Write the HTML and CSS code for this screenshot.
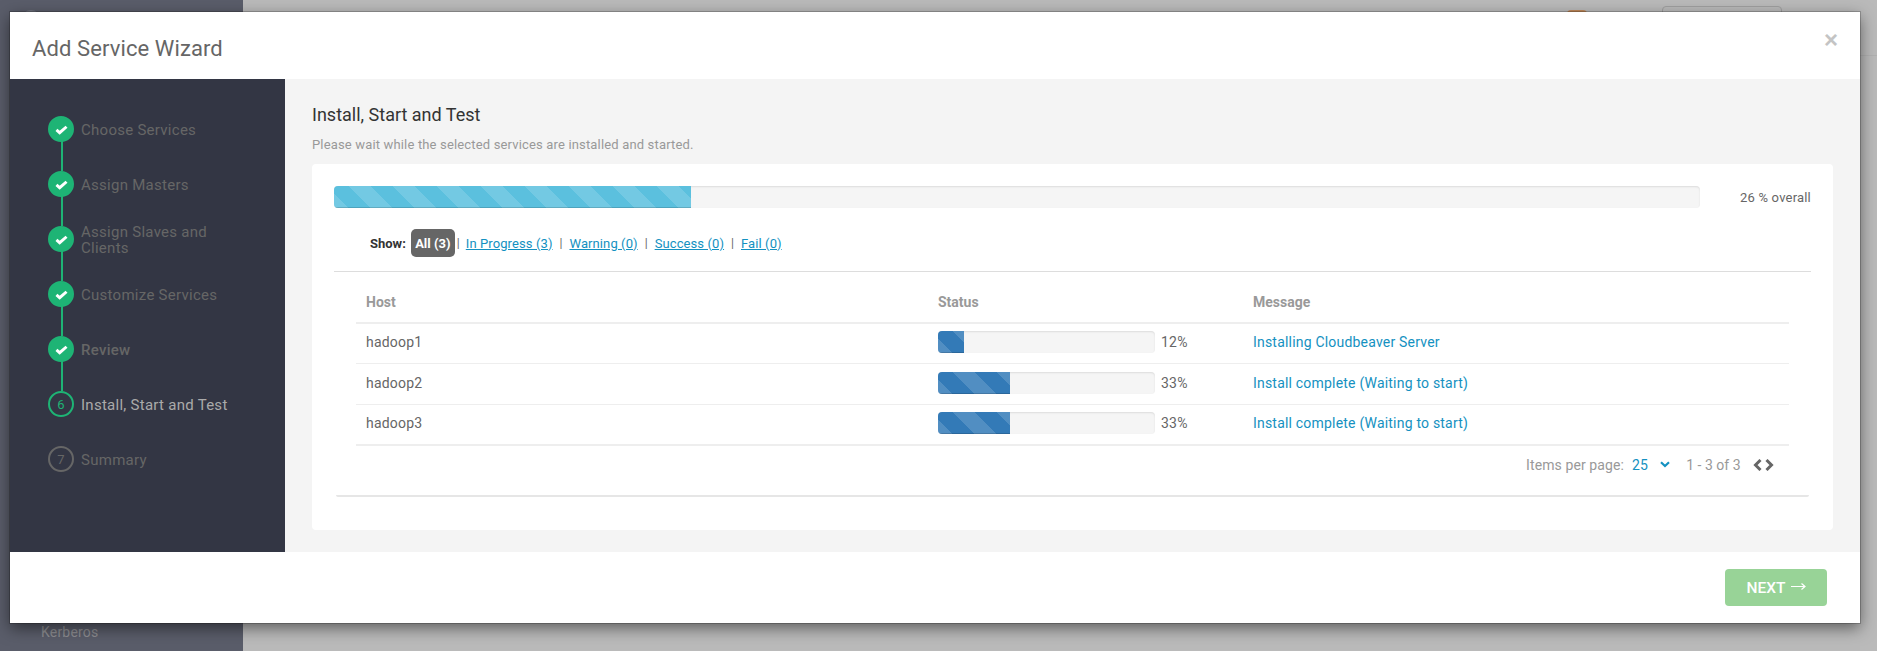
FILE: index.html
```html
<!DOCTYPE html>
<html lang="en">
<head>
<meta charset="utf-8">
<title>Add Service Wizard</title>
<link rel="stylesheet" href="styles.css">
</head>
<body>
<div class="backdrop">
  <aside class="app-nav"><span class="app-logo"></span><span class="app-nav-item">Kerberos</span></aside>
  <div class="app-main"><div class="app-top"><span class="app-badge"></span><span class="app-btn"></span></div></div>
</div>
<section class="modal">
  <header class="modal-head">
    <h1>Add Service Wizard</h1>
    <span class="close">×</span>
  </header>
  <div class="modal-body">
    <nav class="steps">
      <div class="step done"><span class="dot"><svg viewBox="0 0 14 12" width="13" height="11"><path d="M1.5 6.5 5 9.5 12.5 3" fill="none" stroke="#fff" stroke-width="3.2"/></svg></span><span class="label">Choose Services</span></div>
      <div class="step done"><span class="dot"><svg viewBox="0 0 14 12" width="13" height="11"><path d="M1.5 6.5 5 9.5 12.5 3" fill="none" stroke="#fff" stroke-width="3.2"/></svg></span><span class="label">Assign Masters</span></div>
      <div class="step done"><span class="dot"><svg viewBox="0 0 14 12" width="13" height="11"><path d="M1.5 6.5 5 9.5 12.5 3" fill="none" stroke="#fff" stroke-width="3.2"/></svg></span><span class="label">Assign Slaves and Clients</span></div>
      <div class="step done"><span class="dot"><svg viewBox="0 0 14 12" width="13" height="11"><path d="M1.5 6.5 5 9.5 12.5 3" fill="none" stroke="#fff" stroke-width="3.2"/></svg></span><span class="label">Customize Services</span></div>
      <div class="step done"><span class="dot"><svg viewBox="0 0 14 12" width="13" height="11"><path d="M1.5 6.5 5 9.5 12.5 3" fill="none" stroke="#fff" stroke-width="3.2"/></svg></span><span class="label label-bold">Review</span></div>
      <div class="step current"><span class="dot">6</span><span class="label">Install, Start and Test</span></div>
      <div class="step todo"><span class="dot">7</span><span class="label">Summary</span></div>
    </nav>
    <main class="content">
      <h2>Install, Start and Test</h2>
      <p class="sub">Please wait while the selected services are installed and started.</p>
      <div class="card">
        <div class="overall">
          <div class="bar bar-big"><div class="fill info w-26"></div></div>
          <span class="overall-text">26 % overall</span>
        </div>
        <div class="filters">
          <b class="show">Show:</b>
          <span class="pill">All (3)</span><span class="sep first">|</span>
          <a href="#">In Progress (3)</a><span class="sep">|</span>
          <a href="#">Warning (0)</a><span class="sep">|</span>
          <a href="#">Success (0)</a><span class="sep">|</span>
          <a href="#">Fail (0)</a>
        </div>
        <div class="table-wrap">
          <table>
            <thead><tr><th class="c-host">Host</th><th class="c-status">Status</th><th>Message</th></tr></thead>
            <tbody>
              <tr class="row-first"><td>hadoop1</td><td><div class="prog"><div class="bar"><div class="fill blue w-12"></div></div><span class="pct">12%</span></div></td><td><a class="msg" href="#">Installing Cloudbeaver Server</a></td></tr>
              <tr><td>hadoop2</td><td><div class="prog"><div class="bar"><div class="fill blue w-33"></div></div><span class="pct">33%</span></div></td><td><a class="msg" href="#">Install complete (Waiting to start)</a></td></tr>
              <tr><td>hadoop3</td><td><div class="prog"><div class="bar"><div class="fill blue w-33"></div></div><span class="pct">33%</span></div></td><td><a class="msg" href="#">Install complete (Waiting to start)</a></td></tr>
            </tbody>
          </table>
          <div class="pager">
            <span class="items">Items per page:</span>
            <span class="per">25</span>
            <svg class="caret" viewBox="0 0 10 7" width="10" height="7"><path d="M1 1.2 5 5 9 1.2" fill="none" stroke="#1491c1" stroke-width="2.2"/></svg>
            <span class="range">1 - 3 of 3</span>
            <span class="arrows">
              <svg viewBox="0 0 9 12" width="9" height="12"><path d="M7.5 1 2.5 6 7.5 11" fill="none" stroke="#666" stroke-width="3"/></svg>
              <svg viewBox="0 0 9 12" width="9" height="12"><path d="M1.5 1 6.5 6 1.5 11" fill="none" stroke="#666" stroke-width="3"/></svg>
            </span>
          </div>
        </div>
        <div class="rule"></div>
      </div>
    </main>
  </div>
  <footer class="modal-foot">
    <button class="next" type="button">NEXT<svg class="arrow" viewBox="0 0 15 9" width="15" height="9"><path d="M0 4.5H14M10.5 1.5 14 4.5 10.5 7.5" fill="none" stroke="#fff" stroke-width="1.2"/></svg></button>
  </footer>
</section>
</body>
</html>
```
FILE: styles.css
```css
* { box-sizing: border-box; }
html, body { margin: 0; height: 651px; overflow: hidden; }
body { font-family: Roboto, "Liberation Sans", sans-serif; font-size: 14px; color: #666; background: #bababa; }

.backdrop { display: flex; height: 651px; }
.app-nav { width: 243px; background: #5a5d6a; position: relative; flex: none; }
.app-logo { position: absolute; left: 21px; top: 10px; width: 20px; height: 20px; border-radius: 50%; background: #70737f; }
.app-nav-item { position: absolute; left: 41px; top: 624px; font-size: 14px; letter-spacing: .2px; color: #8e8e92; }
.app-main { flex: 1; }
.app-top { height: 56px; border-bottom: 1px solid #b1b1b1; display: flex; justify-content: flex-end; align-items: flex-start; }
.app-badge { width: 20px; height: 20px; margin-top: 10px; margin-right: 75px; border-radius: 4px; background: #c18a5b; }
.app-btn { width: 120px; height: 30px; margin-top: 6px; margin-right: 95px; border: 1px solid #9f9f9f; border-radius: 4px; }

.modal { position: absolute; left: 10px; top: 12px; width: 1850px; height: 611px; background: #fff; display: flex; flex-direction: column; box-shadow: 0 5px 15px rgba(0,0,0,.5), 0 0 0 1px rgba(0,0,0,.2); }
.modal-head { height: 67px; flex: none; display: flex; align-items: center; justify-content: space-between; padding: 5px 22px 0 22px; }
.modal-head h1 { margin: 0; font-size: 22px; letter-spacing: .1px; font-weight: 400; color: #666; }
.close { font-size: 24px; font-weight: 700; color: #c4c4c4; line-height: 1; margin-top: -17px; font-family: "Liberation Sans", sans-serif; }

.modal-body { flex: 1; display: flex; min-height: 0; }
.steps { width: 275px; flex: none; background: #333644; padding: 37px 28px 0 38px; }
.step { display: flex; height: 55px; position: relative; align-items: flex-start; }
.step.done::after { content: ""; position: absolute; left: 13px; top: 25px; width: 2px; height: 30px; background: #1eb475; }
.dot { width: 26px; height: 26px; flex: none; border-radius: 50%; display: flex; align-items: center; justify-content: center; font-size: 13px; border: 2px solid #666; color: #666; }
.done .dot { background: #1eb475; border-color: #1eb475; }
.current .dot { border-color: #1eb475; color: #1eb475; }
.label { margin: 1px 0 0 7px; color: #666; font-size: 15px; letter-spacing: .27px; line-height: 16px; height: 26px; display: flex; align-items: center; }
.label-bold { font-weight: 500; }
.current .label { color: #aaa; }

.content { flex: 1; min-width: 0; background: #f4f4f4; padding: 25px 27px 0; }
.content h2 { margin: 0; font-size: 18px; font-weight: 400; line-height: 21px; color: #333; }
.sub { margin: 12px 0 0; font-size: 13px; letter-spacing: .16px; line-height: 15px; color: #999; }
.card { margin-top: 12px; height: 366px; background: #fff; border-radius: 4px; padding: 22px 22px 0; }

.overall { display: flex; align-items: center; justify-content: space-between; }
.bar { height: 22px; background: #f5f5f5; border-radius: 4px; box-shadow: inset 0 1px 2px rgba(0,0,0,.1); overflow: hidden; flex: 1; }
.bar-big { flex: none; width: 1366px; }
.overall-text { font-size: 13px; letter-spacing: .2px; color: #666; }
.fill { height: 100%; box-shadow: inset 0 -1px 0 rgba(0,0,0,.15); background-image: linear-gradient(45deg, rgba(255,255,255,.15) 25%, transparent 25%, transparent 50%, rgba(255,255,255,.15) 50%, rgba(255,255,255,.15) 75%, transparent 75%, transparent); background-size: 44px 44px; background-position: 15px 0; }
.info { background-color: #5bc0de; }
.blue { background-color: #337ab7; }
.w-26 { width: 26.1%; }
.w-12 { width: 12%; }
.w-33 { width: 33%; }

.filters { display: flex; align-items: center; height: 28px; margin: 21px 0 0 36px; font-size: 13px; color: #666; }
.show { color: #333; font-weight: 700; font-size: 13px; }
.pill { margin-left: 5px; width: 44px; height: 28px; border-radius: 5px; background: #666; color: #fff; font-weight: 700; font-size: 13px; display: flex; align-items: center; justify-content: center; }
.sep { margin: 0 7px; font-size: 12px; color: #666; }
.sep.first { margin: 0 6px 0 2px; }
.filters a { color: #1491c1; font-size: 13px; letter-spacing: .1px; }

.table-wrap { border-top: 1px solid #ddd; margin-top: 14px; padding: 0 22px; }
table { width: 100%; border-collapse: collapse; table-layout: fixed; }
th { height: 51px; padding: 10px 10px 0 10px; text-align: left; font-size: 14px; font-weight: 700; color: #999; border-bottom: 2px solid #eee; }
.c-host { width: 582px; }
.c-status { width: 305px; padding-left: 0; }
td { height: 41px; padding: 0 10px 2px; font-size: 14px; letter-spacing: .2px; color: #666; border-bottom: 1px solid #eee; }
.row-first td { height: 40px; }
td:nth-child(2) { padding-left: 0; }
tbody tr:last-child td { border-bottom-width: 2px; }
.msg { color: #1491c1; text-decoration: none; }
.prog { display: flex; align-items: center; }
.prog .bar { flex: none; width: 217px; }
.pct { margin-left: 6px; }

.pager { height: 38px; margin-bottom: 11px; padding: 0 15px 1px 0; display: flex; align-items: center; justify-content: flex-end; font-size: 14px; color: #999; }
.items { letter-spacing: .1px; }
.per { color: #1491c1; margin-left: 8px; }
.caret { margin-left: 12px; }
.range { margin-left: 16.5px; }
.arrows { margin-left: 12.5px; display: flex; gap: 3px; }
.rule { margin: 0 2px; border-bottom: 2px solid #e6e6e6; border-radius: 0 0 4px 4px; height: 2px; }

.modal-foot { height: 71px; flex: none; display: flex; justify-content: flex-end; align-items: flex-start; padding: 17px 33px 0 0; }
.next { width: 102px; height: 37px; border: 0; border-radius: 4px; background: #98d397; color: #fff; font: 500 15.5px Roboto, sans-serif; padding: 0; display: flex; align-items: center; justify-content: center; }
.arrow { margin-left: 5px; margin-top: -2px; }
```
